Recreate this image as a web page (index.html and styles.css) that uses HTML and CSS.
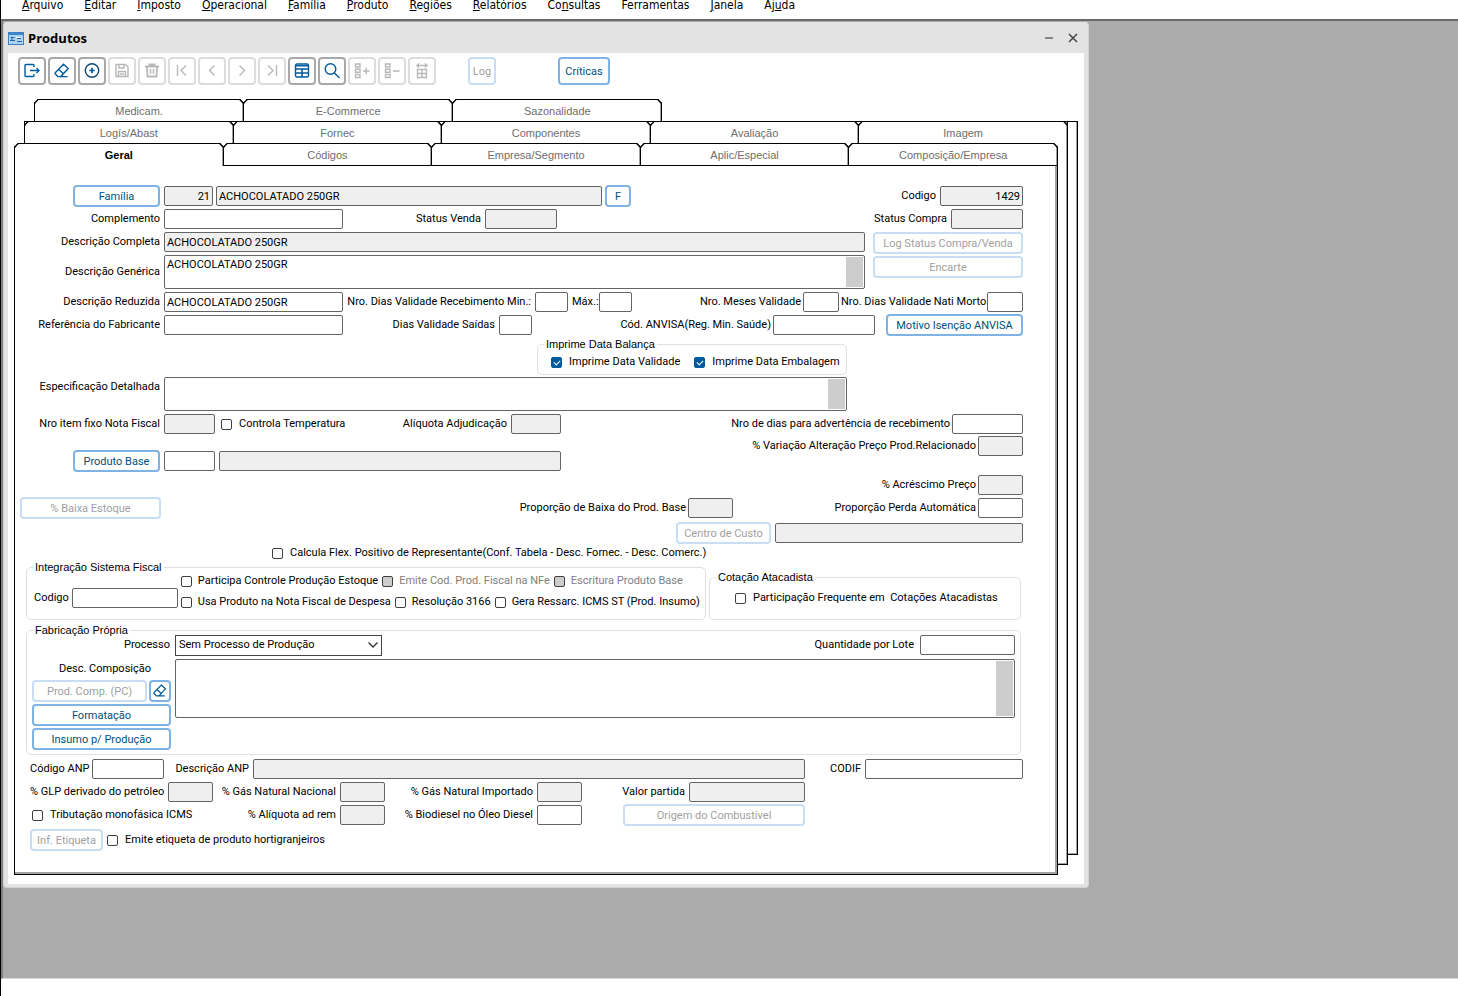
FILE: index.html
```
<!DOCTYPE html>
<html lang="pt-BR">
<head>
  <meta charset="UTF-8" />
  <meta name="viewport" content="width=device-width, initial-scale=1" />
  <title>Produtos</title>
  <link rel="stylesheet" href="styles.css">
</head>
<body>

<nav class="menu">
  <a href="#"><u>A</u>rquivo</a>
  <a href="#"><u>E</u>ditar</a>
  <a href="#"><u>I</u>mposto</a>
  <a href="#"><u>O</u>peracional</a>
  <a href="#"><u>F</u>amília</a>
  <a href="#"><u>P</u>roduto</a>
  <a href="#"><u>R</u>egiões</a>
  <a href="#"><u>R</u>elatórios</a>
  <a href="#">Co<u>n</u>sultas</a>
  <a href="#">Ferramentas</a>
  <a href="#"><u>J</u>anela</a>
  <a href="#">Aj<u>u</u>da</a>
</nav>

<main class="desktop">
  <section class="window">
    <header class="titlebar">
      <svg class="app-icon" width="16" height="13" viewBox="0 0 16 13">
        <rect x="0.5" y="0.5" width="15" height="12" fill="#a9d3f5" stroke="#3f7fc0"/>
        <rect x="1" y="1" width="14" height="2" fill="#3b86d0"/>
        <path d="M2.500 5.500h4M2 8.500h5M3 7h2M9 6.500h4M9 9.500h5" stroke="#2c5f96"/>
        <path d="M8 5.500h5" stroke="#fff"/>
      </svg>
      <h1>Produtos</h1>
      <div class="win-buttons">
        <button type="button" aria-label="Minimizar"><svg width="10" height="10" viewBox="0 0 10 10"><path d="M1 5h8" stroke="#8a8484" stroke-width="2"/></svg></button>
        <button type="button" aria-label="Fechar"><svg width="10" height="10" viewBox="0 0 10 10"><path d="M1 1l8 8M9 1l-8 8" stroke="#444" stroke-width="1.500"/></svg></button>
      </div>
    </header>

    <div class="toolbar">
      <button type="button" class="tool" aria-label="Sair"><svg viewBox="0 0 16 16"><path d="M10 4V2.500a1 1 0 0 0-1-1H2a1 1 0 0 0-1 1v10a1 1 0 0 0 1 1h7a1 1 0 0 0 1-1V11M6 7.500h9M12.500 5l2.500 2.500-2.500 2.500"/></svg></button>
      <button type="button" class="tool" aria-label="Limpar"><svg viewBox="0 0 16 16"><path d="M9.500 1.200L14.200 5.600 6.800 13.600H3.800L1.200 10.800V9.800zM4.800 6.600l4.600 4.200M6.800 13.600h6.700"/></svg></button>
      <button type="button" class="tool" aria-label="Incluir"><svg viewBox="0 0 16 16"><circle cx="8" cy="7.500" r="6.700" stroke="#134a70"/><path d="M8 4.800v5.400M5.300 7.500h5.400" stroke-width="1.700"/></svg></button>
      <button type="button" class="tool" disabled aria-label="Salvar"><svg viewBox="0 0 16 16"><path d="M2 1.500h9.500L14 4v9.500H2zM5 1.500V5h5V1.500M4.500 13.500v-5h7v5M6 11h4"/></svg></button>
      <button type="button" class="tool" disabled aria-label="Excluir"><svg viewBox="0 0 16 16"><path d="M1 3.500h14M5.500 3.500v-2h5v2M3 3.500l.5 10h9l.5-10" stroke-width="1.800"/><path d="M6.500 6v5M9.500 6v5"/></svg></button>
      <button type="button" class="tool" disabled aria-label="Primeiro"><svg viewBox="0 0 16 16"><path d="M3.500 2v11M12 2.500L7 7.500l5 5"/></svg></button>
      <button type="button" class="tool" disabled aria-label="Anterior"><svg viewBox="0 0 16 16"><path d="M10.500 2.500l-5 5 5 5"/></svg></button>
      <button type="button" class="tool" disabled aria-label="Próximo"><svg viewBox="0 0 16 16"><path d="M5.500 2.500l5 5-5 5"/></svg></button>
      <button type="button" class="tool" disabled aria-label="Último"><svg viewBox="0 0 16 16"><path d="M12.500 2v11M4 2.500l5 5-5 5"/></svg></button>
      <button type="button" class="tool" aria-label="Tabela"><svg viewBox="0 0 16 16"><rect x="1.500" y="1" width="13" height="13" rx="1.500"/><path d="M1.500 2.800h13M1.500 6h13M1.500 10h13M8 6v8" stroke-width="1.600"/></svg></button>
      <button type="button" class="tool" aria-label="Pesquisar"><svg viewBox="0 0 16 16"><circle cx="6.500" cy="6" r="5.300"/><path d="M10.500 10l5 5"/></svg></button>
      <button type="button" class="tool" disabled aria-label="Adicionar item"><svg viewBox="0 0 16 16"><path d="M1.500 1h4.500v3h-4.500zM1.500 6.200h4.500v3h-4.500zM1.500 11.500h4.500v3h-4.500zM9 8h6.500M12.200 4.800v6.500"/></svg></button>
      <button type="button" class="tool" disabled aria-label="Remover item"><svg viewBox="0 0 16 16"><path d="M1.500 1h4.500v3h-4.500zM1.500 6.200h4.500v3h-4.500zM1.500 11.500h4.500v3h-4.500zM9 8h6.500"/></svg></button>
      <button type="button" class="tool" disabled aria-label="Ajustar colunas"><svg viewBox="0 0 16 16"><path d="M3 2.500h10M5 .5l-2 2 2 2M11 .5l2 2-2 2M3.500 6.500h9v8h-9zM8 6.500v8M3.500 10.500h9"/></svg></button>
      <button type="button" class="btn tool-text tool-log" disabled>Log</button>
      <button type="button" class="btn tool-text tool-crit">Críticas</button>
    </div>

    <div class="tabset">
      <div class="sheet sheet-back"></div>
      <div class="sheet sheet-mid"></div>

      <div class="tabs tabs-third" role="tablist">
        <button type="button" role="tab" class="tab">Medicam.</button>
        <button type="button" role="tab" class="tab">E-Commerce</button>
        <button type="button" role="tab" class="tab">Sazonalidade</button>
      </div>
      <div class="tabs tabs-second" role="tablist">
        <button type="button" role="tab" class="tab">Logís/Abast</button>
        <button type="button" role="tab" class="tab">Fornec</button>
        <button type="button" role="tab" class="tab">Componentes</button>
        <button type="button" role="tab" class="tab">Avaliação</button>
        <button type="button" role="tab" class="tab">Imagem</button>
      </div>
      <div class="tabs tabs-first" role="tablist">
        <button type="button" role="tab" class="tab active" aria-selected="true">Geral</button>
        <button type="button" role="tab" class="tab">Códigos</button>
        <button type="button" role="tab" class="tab">Empresa/Segmento</button>
        <button type="button" role="tab" class="tab">Aplic/Especial</button>
        <button type="button" role="tab" class="tab">Composição/Empresa</button>
      </div>

      <form class="pane">
        <!-- identificação -->
        <div class="row">
          <div class="lead"><button type="button" class="btn w-87">Família</button></div>
          <div class="cluster c3">
            <input class="num w-49" type="text" value="21" readonly aria-label="Família código">
            <input class="w-386" type="text" value="ACHOCOLATADO 250GR" readonly aria-label="Família descrição">
            <button type="button" class="btn w-26">F</button>
          </div>
          <div class="cluster push c4">
            <label for="codigo">Codigo</label>
            <input class="num w-83" type="text" id="codigo" value="1429" readonly>
          </div>
        </div>
        <div class="row">
          <label class="lead" for="complemento">Complemento</label>
          <input class="w-179" type="text" id="complemento">
          <label class="w-134" for="stvenda">Status Venda</label>
          <input class="w-72" type="text" id="stvenda" readonly>
          <div class="cluster push c4">
            <label for="stcompra">Status Compra</label>
            <input class="w-72" type="text" id="stcompra" readonly>
          </div>
        </div>
        <div class="split">
          <div class="stack">
            <div class="row">
              <label class="lead" for="desccomp">Descrição Completa</label>
              <input class="w-701" type="text" id="desccomp" value="ACHOCOLATADO 250GR" readonly>
            </div>
            <div class="row tall">
              <label class="lead" for="descgen">Descrição Genérica</label>
              <textarea class="w-701" id="descgen">ACHOCOLATADO 250GR</textarea>
            </div>
          </div>
          <div class="btn-stack w-150">
            <button type="button" class="btn" disabled>Log Status Compra/Venda</button>
            <button type="button" class="btn" disabled>Encarte</button>
          </div>
        </div>
        <div class="row">
          <label class="lead" for="descred">Descrição Reduzida</label>
          <input class="w-179" type="text" id="descred" value="ACHOCOLATADO 250GR">
          <label class="w-184" for="valmin">Nro. Dias Validade Recebimento Min.:</label>
          <input class="w-33" type="text" id="valmin">
          <label class="w-23" for="valmax">Máx.:</label>
          <input class="w-33" type="text" id="valmax">
          <div class="cluster push c2">
            <label for="meses">Nro. Meses Validade</label>
            <input class="w-36" type="text" id="meses">
            <label class="w-144" for="nati">Nro. Dias Validade Nati Morto</label>
            <input class="w-36" type="text" id="nati">
          </div>
        </div>
        <div class="row">
          <label class="lead" for="reffab">Referência do Fabricante</label>
          <input class="w-179" type="text" id="reffab">
          <label class="w-148" for="valsai">Dias Validade Saídas</label>
          <input class="w-33" type="text" id="valsai">
          <div class="cluster push c2">
            <label for="anvisa">Cód. ANVISA(Reg. Min. Saúde)</label>
            <input class="w-102" type="text" id="anvisa">
            <button type="button" class="btn w-137 apart">Motivo Isenção ANVISA</button>
          </div>
        </div>
        <fieldset class="balanca">
          <legend>Imprime Data Balança</legend>
          <div class="group-body">
            <label class="check"><input type="checkbox" checked>Imprime Data Validade</label>
            <label class="check"><input type="checkbox" checked>Imprime Data Embalagem</label>
          </div>
        </fieldset>
        <div class="row tall top">
          <label class="lead" for="espec">Especificação Detalhada</label>
          <textarea class="w-683" id="espec"></textarea>
        </div>

        <!-- produto base -->
        <div class="split base">
          <div class="stack base-left">
            <div class="row">
              <label class="lead" for="itemnf">Nro item fixo Nota Fiscal</label>
              <input class="w-51" type="text" id="itemnf" readonly>
              <label class="check near"><input type="checkbox">Controla Temperatura</label>
              <div class="cluster push c4">
                <label for="adjud">Alíquota Adjudicação</label>
                <input class="w-50" type="text" id="adjud" readonly>
              </div>
            </div>
            <div class="row">
              <div class="lead"><button type="button" class="btn w-87">Produto Base</button></div>
              <input class="w-51" type="text" aria-label="Produto base código">
              <input class="grow" type="text" readonly aria-label="Produto base descrição">
            </div>
          </div>
          <div class="stack base-right">
            <div class="cluster c2">
              <label for="advert">Nro de dias para advertência de recebimento</label>
              <input class="w-71" type="text" id="advert">
            </div>
            <div class="cluster c2">
              <label for="variacao">% Variação Alteração Preço Prod.Relacionado</label>
              <input class="w-45" type="text" id="variacao" readonly>
            </div>
          </div>
        </div>
        <div class="row">
          <div class="cluster push c2">
            <label for="acresc">% Acréscimo Preço</label>
            <input class="w-45" type="text" id="acresc" readonly>
          </div>
        </div>
        <div class="row">
          <button type="button" class="btn w-141" disabled>% Baixa Estoque</button>
          <div class="cluster push c2">
            <label for="propbaixa">Proporção de Baixa do Prod. Base</label>
            <input class="w-45" type="text" id="propbaixa" readonly>
            <label class="w-241" for="perda">Proporção Perda Automática</label>
            <input class="w-45" type="text" id="perda">
          </div>
        </div>
        <div class="row custo">
          <div class="cluster push c4">
            <button type="button" class="btn w-95" disabled>Centro de Custo</button>
            <input class="w-248" type="text" readonly aria-label="Centro de custo">
          </div>
        </div>
        <div class="row flex-pos">
          <label class="check"><input type="checkbox">Calcula Flex. Positivo de Representante(Conf. Tabela - Desc. Fornec. - Desc. Comerc.)</label>
        </div>

        <!-- grupos fiscais -->
        <div class="groups">
          <fieldset class="fiscal">
            <legend>Integração Sistema Fiscal</legend>
            <div class="group-body">
              <label for="codfiscal">Codigo</label>
              <input class="w-106" type="text" id="codfiscal">
              <div class="checks">
                <div>
                  <label class="check"><input type="checkbox">Participa Controle Produção Estoque</label>
                  <label class="check off"><input type="checkbox" disabled>Emite Cod. Prod. Fiscal na NFe</label>
                  <label class="check off"><input type="checkbox" disabled>Escritura Produto Base</label>
                </div>
                <div>
                  <label class="check"><input type="checkbox">Usa Produto na Nota Fiscal de Despesa</label>
                  <label class="check"><input type="checkbox">Resolução 3166</label>
                  <label class="check"><input type="checkbox">Gera Ressarc. ICMS ST (Prod. Insumo)</label>
                </div>
              </div>
            </div>
          </fieldset>
          <fieldset class="cotacao">
            <legend>Cotação Atacadista</legend>
            <div class="group-body">
              <label class="check"><input type="checkbox">Participação Frequente em &nbsp;Cotações Atacadistas</label>
            </div>
          </fieldset>
        </div>

        <fieldset class="fabricacao">
          <legend>Fabricação Própria</legend>
          <div class="fab-top">
            <label class="w-138" for="processo">Processo</label>
            <div class="select">
              <select id="processo">
                <option>Sem Processo de Produção</option>
              </select>
              <svg width="10" height="6" viewBox="0 0 10 6"><path d="M.5.5L5 5 9.500.5" fill="none" stroke="#333" stroke-width="1.300"/></svg>
            </div>
            <div class="cluster push c6">
              <label for="lote">Quantidade por Lote</label>
              <input class="w-95" type="text" id="lote">
            </div>
          </div>
          <div class="fab-body">
            <div class="fab-left">
              <label for="composicao">Desc. Composição</label>
              <div class="pair">
                <button type="button" class="btn grow" disabled>Prod. Comp. (PC)</button>
                <button type="button" class="btn erase" aria-label="Limpar composição"><svg viewBox="0 0 16 16"><path d="M9.500 1.200L14.200 5.600 6.800 13.600H3.800L1.200 10.800V9.800zM4.800 6.600l4.600 4.200M6.800 13.600h6.700"/></svg></button>
              </div>
              <button type="button" class="btn">Formatação</button>
              <button type="button" class="btn">Insumo p/ Produção</button>
            </div>
            <textarea class="grow" id="composicao"></textarea>
          </div>
        </fieldset>

        <!-- combustíveis -->
        <div class="fuel">
          <div class="row">
            <label class="w-58 left" for="codanp">Código ANP</label>
            <input class="w-72" type="text" id="codanp">
            <label class="w-81" for="descanp">Descrição ANP</label>
            <input class="w-552" type="text" id="descanp" readonly>
            <div class="cluster push c4">
              <label for="codif">CODIF</label>
              <input class="w-158" type="text" id="codif">
            </div>
          </div>
          <div class="row">
            <label class="w-134" for="glp">% GLP derivado do petróleo</label>
            <input class="w-45" type="text" id="glp" readonly>
            <label class="w-119" for="gnn">% Gás Natural Nacional</label>
            <input class="w-45" type="text" id="gnn" readonly>
            <label class="w-144" for="gni">% Gás Natural Importado</label>
            <input class="w-45" type="text" id="gni" readonly>
            <label class="w-99" for="partida">Valor partida</label>
            <input class="w-116" type="text" id="partida" readonly>
          </div>
          <div class="row">
            <label class="check w-183"><input type="checkbox">Tributação monofásica ICMS</label>
            <label class="w-119" for="adrem">% Alíquota ad rem</label>
            <input class="w-45" type="text" id="adrem" readonly>
            <label class="w-144" for="biod">% Biodiesel no Óleo Diesel</label>
            <input class="w-45" type="text" id="biod">
            <button type="button" class="btn w-182 origem" disabled>Origem do Combustível</button>
          </div>
          <div class="row etiqueta">
            <button type="button" class="btn w-73" disabled>Inf. Etiqueta</button>
            <label class="check"><input type="checkbox">Emite etiqueta de produto hortigranjeiros</label>
          </div>
        </div>
      </form>
    </div>
  </section>
</main>

<footer class="statusbar"></footer>

</body>
</html>
```
FILE: styles.css
```
* {
  box-sizing: border-box;
}

body {
  margin: 0;
  min-height: 100vh;
  display: flex;
  flex-direction: column;
  border-left: 1px solid #000;
  background: #fff;
  color: #000;
  font-family: Roboto, "Liberation Sans", sans-serif;
  font-size: 11px;
  line-height: 14px;
}

button,
input,
select,
textarea {
  font: inherit;
  color: inherit;
  margin: 0;
}

/* menu */
.menu {
  height: 19px;
  padding-left: 21px;
  display: flex;
  gap: 21px;
  font-family: "DejaVu Sans Condensed", "Open Sans", sans-serif;
  font-size: 12px;
  line-height: 10px;
}

.menu a {
  color: #000;
  text-decoration: none;
}

.desktop {
  flex: 1;
  padding: 1px 0 90px;
  border-top: 2px solid #696969;
  border-left: 2px solid #808080;
  border-bottom: 1px solid #d8d8d8;
  background: #ababab;
}

.statusbar {
  height: 18px;
}

/* janela */
.window {
  width: 100%;
  max-width: 1086px;
  padding: 0 4px 3px;
  border: 1px solid #d2d2d2;
  border-top-color: #e3e3e3;
  border-radius: 4px;
  background: #e3e3e3;
}

.titlebar {
  height: 30px;
  display: flex;
  align-items: center;
  padding-right: 6px;
}

.titlebar h1 {
  margin: 0 auto 0 4px;
  font-family: "Open Sans", sans-serif;
  font-size: 13px;
  line-height: 18px;
  font-weight: bold;
}

.win-buttons {
  display: flex;
  gap: 14px;
}

.win-buttons button {
  width: 10px;
  height: 10px;
  padding: 0;
  border: 0;
  background: none;
  display: flex;
}

.toolbar {
  display: flex;
  gap: 2px;
  padding: 4px 10px 14px;
  background: #fff;
}

.tool {
  width: 28px;
  height: 28px;
  padding: 0;
  display: flex;
  align-items: center;
  justify-content: center;
  border: 2px solid #a8a8a8;
  border-radius: 4px;
  background: #fff;
  color: #005a9e;
}

.tool:disabled {
  border-color: #dcdcdc;
  color: #b8b8b8;
}

.tool svg,
.erase svg {
  width: 16px;
  height: 16px;
  flex: none;
  fill: none;
  stroke: currentColor;
  stroke-width: 1.400;
}

.erase svg {
  width: 14px;
  height: 14px;
}

.toolbar .tool-text {
  height: 28px;
}

.tool-log {
  width: 28px;
  margin-left: 30px;
}

.tool-crit {
  width: 52px;
  margin-left: 60px;
}

/* abas */
.tabset {
  position: relative;
  padding: 0 26px 9px 6px;
  background: #fff;
}

.sheet {
  position: absolute;
  top: 22px;
  border: 1px solid #000;
  box-shadow: inset -1px -1px #a0a0a0;
  background: #fff;
}

.sheet-back {
  left: 26px;
  right: 6px;
  bottom: 29px;
}

.sheet-mid {
  left: 16px;
  right: 16px;
  bottom: 19px;
}

.tabs {
  position: relative;
  display: flex;
  height: 22px;
}

.tabs-third {
  margin-left: 20px;
  width: calc(60% + 2px);
}

.tabs-second {
  margin: 0 -10px 0 10px;
}

.tab {
  flex: 1 1 0;
  margin-left: -1px;
  padding: 0;
  border: 1px solid #000;
  border-bottom: 0;
  border-radius: 4px 4px 0 0;
  corner-shape: bevel;
  box-shadow: inset -1px 0 #a0a0a0;
  background: #fff;
  color: #6e6e6e;
  font-family: "Liberation Sans", Arial, sans-serif;
  font-size: 11px;
}

.tab:first-child {
  margin-left: 0;
}

.tab.active {
  margin-bottom: -1px;
  z-index: 1;
  color: #000;
  font-weight: bold;
}

.pane {
  position: relative;
  padding: 20px 34px 21px 5px;
  border: 1px solid #000;
  box-shadow: inset -2px -2px #a0a0a0;
  background: #fff;
}

/* linhas do formulário */
.row {
  display: flex;
  align-items: center;
  gap: 4px;
  height: 20px;
  margin-bottom: 3px;
}

.row.tall {
  height: 34px;
}

.row.top {
  align-items: flex-start;
}

.row.top label {
  line-height: 20px;
}

.split {
  display: flex;
  justify-content: space-between;
}

.cluster {
  display: flex;
  align-items: center;
  height: 20px;
}

.c2 { gap: 2px; }
.c3 { gap: 3px; }
.c4 { gap: 4px; }
.c6 { gap: 6px; }

.push {
  margin-left: auto;
}

.grow {
  flex: 1;
  min-width: 0;
}

label {
  flex: none;
  white-space: nowrap;
  text-align: right;
}

.left {
  text-align: left;
}

.lead {
  width: 140px;
  flex: none;
  display: flex;
  justify-content: flex-end;
}

input[type="text"],
textarea {
  height: 20px;
  flex: none;
  padding: 0 2px;
  border: 1px solid #646464;
  border-radius: 2px;
  background: #fff;
  outline: none;
}

input[type="text"].grow,
textarea.grow {
  flex: 1;
}

input[readonly] {
  background: #efefef;
}

input.num {
  text-align: right;
}

textarea {
  height: 34px;
  padding: 2px;
  display: block;
  resize: none;
  overflow: hidden;
  background: linear-gradient(#cdcdcd, #cdcdcd) right 1px top 1px / 17px calc(100% - 2px) no-repeat #fff;
}

.btn {
  height: 22px;
  flex: none;
  padding: 2px 0 0;
  border: 2px solid #7fb2e5;
  border-radius: 4px;
  background: #fff;
  color: #00507d;
  white-space: nowrap;
}

.btn:disabled {
  border-color: #c8def4;
  color: #a0a0a0;
}

.btn.grow {
  flex: 1;
}

.btn-stack {
  display: flex;
  flex-direction: column;
  gap: 2px;
}

.apart {
  margin-left: 9px;
}

.check {
  display: flex;
  align-items: center;
  gap: 7px;
  text-align: left;
}

.check input {
  appearance: none;
  width: 11px;
  height: 11px;
  flex: none;
  border: 1px solid #404040;
  border-radius: 2px;
  background: #fff;
  position: relative;
}

.check input:checked {
  border-color: #005a9e;
  background: #005a9e;
}

.check input:checked::after {
  content: "";
  position: absolute;
  left: 2px;
  top: 2px;
  width: 5px;
  height: 3px;
  border-left: 1px solid #fff;
  border-bottom: 1px solid #fff;
  transform: rotate(-45deg);
}

.check input:disabled {
  background: #cdcdcd;
}

.check.off {
  color: #808080;
}

.near {
  margin-left: 2px;
}

/* grupos */
fieldset {
  min-width: 0;
  margin: 0;
  padding: 0;
  border: 1px solid #e0e0e0;
  border-radius: 5px;
}

legend {
  margin-left: 6px;
  padding: 0 2px;
  font-family: "Liberation Sans", Arial, sans-serif;
  font-size: 11px;
  line-height: 12px;
}

.group-body {
  display: flex;
}

.balanca {
  width: 310px;
  height: 37px;
  margin: 0 0 2px 517px;
}

.balanca .group-body {
  padding: 5px 13px 0;
  gap: 14px;
}

.base {
  margin-bottom: 4px;
}

.base-left {
  width: 541px;
}

.base-left .row {
  margin-bottom: 17px;
}

.base-left .row:last-child {
  margin-bottom: 0;
}

.base-right {
  display: flex;
  flex-direction: column;
  align-items: flex-end;
  gap: 2px;
}

.row.custo {
  margin-top: 5px;
  margin-bottom: 0;
}

.flex-pos {
  padding-left: 252px;
  margin-bottom: 0;
}

.groups {
  display: flex;
  align-items: flex-end;
  gap: 3px;
  margin: -2px 2px 4px 6px;
}

.fiscal {
  width: 680px;
  height: 59px;
}

.fiscal .group-body {
  padding-left: 7px;
  align-items: flex-end;
  gap: 3px;
}

.fiscal .w-106 {
  margin-bottom: 6px;
}

.fiscal .group-body > label {
  line-height: 20px;
  margin-bottom: 6px;
}

.checks {
  display: flex;
  flex-direction: column;
  gap: 7px;
  padding: 1px 0 5px;
}

.checks > div {
  display: flex;
  gap: 4px;
}

.checks .check {
  gap: 6px;
}

.cotacao {
  flex: 1;
  height: 49px;
}

.cotacao .group-body {
  padding: 8px 0 0 25px;
}

.fabricacao {
  height: 131px;
  margin: 0 2px 4px 6px;
}

.fab-top {
  display: flex;
  align-items: center;
  gap: 5px;
  height: 20px;
  padding: 0 5px;
  margin-bottom: 4px;
  margin-top: -1px;
}

.select {
  position: relative;
  width: 207px;
}

.select select {
  width: 100%;
  height: 21px;
  padding: 0 3px;
  display: block;
  appearance: none;
  border: 1px solid #444;
  border-radius: 0;
  background: #fff;
}

.select svg {
  position: absolute;
  right: 4px;
  top: 7px;
  pointer-events: none;
}

.fab-body {
  display: flex;
  align-items: flex-start;
  gap: 4px;
  padding: 0 5px;
}

.fab-body textarea {
  height: 59px;
}

.fab-left {
  width: 139px;
  display: flex;
  flex-direction: column;
  gap: 2px;
}

.fab-left label {
  padding-right: 20px;
  line-height: 19px;
}

.pair {
  display: flex;
  gap: 2px;
}

.erase {
  width: 22px;
  padding: 0;
  display: flex;
  align-items: center;
  justify-content: center;
  color: #005a9e;
}

.fuel {
  padding-left: 10px;
}

.origem {
  margin-left: 37px;
}

.w-183.check {
  padding-left: 2px;
}

.etiqueta {
  margin-top: 5px;
}

/* larguras */
.w-23 { width: 23px; }
.w-26 { width: 26px; }
.w-33 { width: 33px; }
.w-36 { width: 36px; }
.w-45 { width: 45px; }
.w-49 { width: 49px; }
.w-50 { width: 50px; }
.w-51 { width: 51px; }
.w-58 { width: 58px; }
.w-71 { width: 71px; }
.w-72 { width: 72px; }
.w-73 { width: 73px; }
.w-81 { width: 81px; }
.w-83 { width: 83px; }
.w-87 { width: 87px; }
.w-95 { width: 95px; }
.w-99 { width: 99px; }
.w-102 { width: 102px; }
.w-106 { width: 106px; }
.w-116 { width: 116px; }
.w-119 { width: 119px; }
.w-134 { width: 134px; }
.w-137 { width: 137px; }
.w-138 { width: 138px; }
.w-141 { width: 141px; }
.w-144 { width: 144px; }
.w-148 { width: 148px; }
.w-150 { width: 150px; }
.w-158 { width: 158px; }
.w-179 { width: 179px; }
.w-182 { width: 182px; }
.w-183 { width: 183px; }
.w-184 { width: 184px; }
.w-241 { width: 241px; }
.w-248 { width: 248px; }
.w-386 { width: 386px; }
.w-552 { width: 552px; }
.w-683 { width: 683px; }
.w-701 { width: 701px; }
```
